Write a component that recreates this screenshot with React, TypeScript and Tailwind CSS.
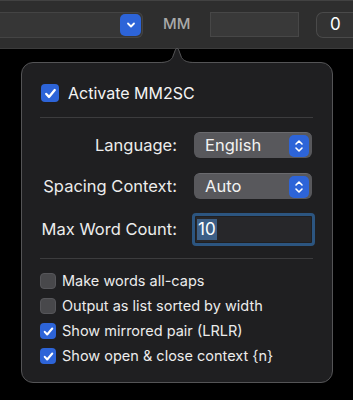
import { useState } from 'react'

const FONT = "font-['Inter','Noto_Sans','Liberation_Sans',sans-serif]"

function CheckMark({ size }: { size: number }) {
  return (
    <svg width={size} height={size} viewBox="0 0 16 16" fill="none">
      <path d="M4 8.4l2.6 2.8L12 4.8" stroke="white" strokeWidth={2.2} strokeLinecap="round" strokeLinejoin="round" />
    </svg>
  )
}

function Stepper() {
  return (
    <div className="w-[20px] h-[22px] rounded-[5px] bg-[#2d64d8] flex items-center justify-center">
      <svg width="10" height="14" viewBox="0 0 10 14" fill="none">
        <path d="M2 5l3-3 3 3M2 9l3 3 3-3" stroke="white" strokeWidth={1.6} strokeLinecap="round" strokeLinejoin="round" />
      </svg>
    </div>
  )
}

function Popup({ value }: { value: string }) {
  return (
    <div className="w-[118px] h-[26px] rounded-[6px] bg-[#58585c] border-t border-[#6a6a6e] flex items-center justify-between pl-[11px] pr-[3px]">
      <span className="text-[16.5px] text-[#f2f2f2]">{value}</span>
      <Stepper />
    </div>
  )
}

function SmallCheck({ label, checked }: { label: string; checked: boolean }) {
  return (
    <div className="flex items-center h-[16px]">
      {checked ? (
        <div className="w-[16px] h-[16px] rounded-[4px] bg-[#2d64d8] flex items-center justify-center">
          <CheckMark size={15} />
        </div>
      ) : (
        <div className="w-[16px] h-[16px] rounded-[4px] bg-[#48484b] border border-[#56565a]" />
      )}
      <span className="ml-[6px] text-[14.5px] text-[#ececec] whitespace-nowrap">{label}</span>
    </div>
  )
}

export default function App() {
  const [count] = useState('10')

  return (
    <div className={`w-[353px] h-[400px] bg-black overflow-hidden ${FONT}`}>
      {/* Toolbar */}
      <div className="h-[49px] bg-[#2e2e2e] border-t border-[#424242] border-b border-b-[#3c3c3c] flex items-center">
        <div className="w-[143px] h-[26px] bg-[#363636] border border-[#444] rounded-r-[6px] border-l-0 flex items-center justify-end pr-[1px]">
          <div className="w-[21px] h-[22px] rounded-[5px] bg-[#2d64d8] flex items-center justify-center">
            <svg width="10" height="8" viewBox="0 0 10 8" fill="none">
              <path d="M2 2.5l3 3 3-3" stroke="white" strokeWidth={1.8} strokeLinecap="round" strokeLinejoin="round" />
            </svg>
          </div>
        </div>
        <span className="ml-[20px] w-[27px] text-[15px] font-medium text-[#a9a9a9]">MM</span>
        <div className="ml-[20px] w-[89px] h-[25px] bg-[#393939] border border-[#474747]" />
        <div className="ml-[17px] flex-1 h-[26px] bg-[#333] border border-[#4a4a4a] border-r-0 rounded-l-[7px] flex items-center pl-[13px]">
          <span className="text-[17px] text-white">0</span>
        </div>
      </div>

      {/* Popover */}
      <div className="relative ml-[21px] mt-[13px] w-[312px] h-[321px] rounded-[12px] bg-[#1f1f21] border border-[#545456] flex flex-col">
        <svg className="absolute top-[-16px] left-[136.5px]" width="36" height="17" viewBox="0 0 36 17" fill="none">
          <path d="M0 15.5C8 15.5 11 14 13.5 10.5L16.6 2.2Q18 0 19.4 2.2L22.5 10.5C25 14 28 15.5 36 15.5V17H0Z" fill="#1f1f21" />
          <path d="M0 15.5C8 15.5 11 14 13.5 10.5L16.6 2.2Q18 0 19.4 2.2L22.5 10.5C25 14 28 15.5 36 15.5" stroke="#545456" strokeWidth={1} />
        </svg>

        <div className="mt-[21px] ml-[19px] flex items-center h-[18px]">
          <div className="w-[18px] h-[18px] rounded-[4px] bg-[#2d64d8] flex items-center justify-center">
            <CheckMark size={17} />
          </div>
          <span className="ml-[9px] text-[16px] text-[#f4f4f4]">Activate MM2SC</span>
        </div>

        <div className="mt-[15px] ml-[18px] mr-[19px] h-px bg-[#3c3c3e]" />

        <div className="mt-[14px] flex items-center">
          <span className="w-[155px] text-right text-[16.5px] text-[#ececec] whitespace-nowrap">Language:</span>
          <div className="ml-[17px]">
            <Popup value="English" />
          </div>
        </div>

        <div className="mt-[15px] flex items-center">
          <span className="w-[155px] text-right text-[16.5px] text-[#ececec] whitespace-nowrap">Spacing Context:</span>
          <div className="ml-[17px]">
            <Popup value="Auto" />
          </div>
        </div>

        <div className="mt-[14px] flex items-center">
          <span className="w-[155px] text-right text-[16.5px] text-[#ececec] whitespace-nowrap">Max Word Count:</span>
          <div className="ml-[15px] w-[123px] h-[33px] rounded-[4px] border-[3px] border-[#2c5580] p-px">
            <div className="w-full h-full bg-[#27272a] flex items-center pl-px">
              <span className="text-[17px] leading-[21px] text-white bg-[#3d5f86] px-px">{count}</span>
            </div>
          </div>
        </div>

        <div className="mt-[12px] ml-[18px] mr-[19px] h-px bg-[#3c3c3e]" />

        <div className="mt-[14px] ml-[18px] flex flex-col gap-[9px]">
          <SmallCheck label="Make words all-caps" checked={false} />
          <SmallCheck label="Output as list sorted by width" checked={false} />
          <SmallCheck label="Show mirrored pair (LRLR)" checked />
          <SmallCheck label="Show open & close context {n}" checked />
        </div>
      </div>
    </div>
  )
}
